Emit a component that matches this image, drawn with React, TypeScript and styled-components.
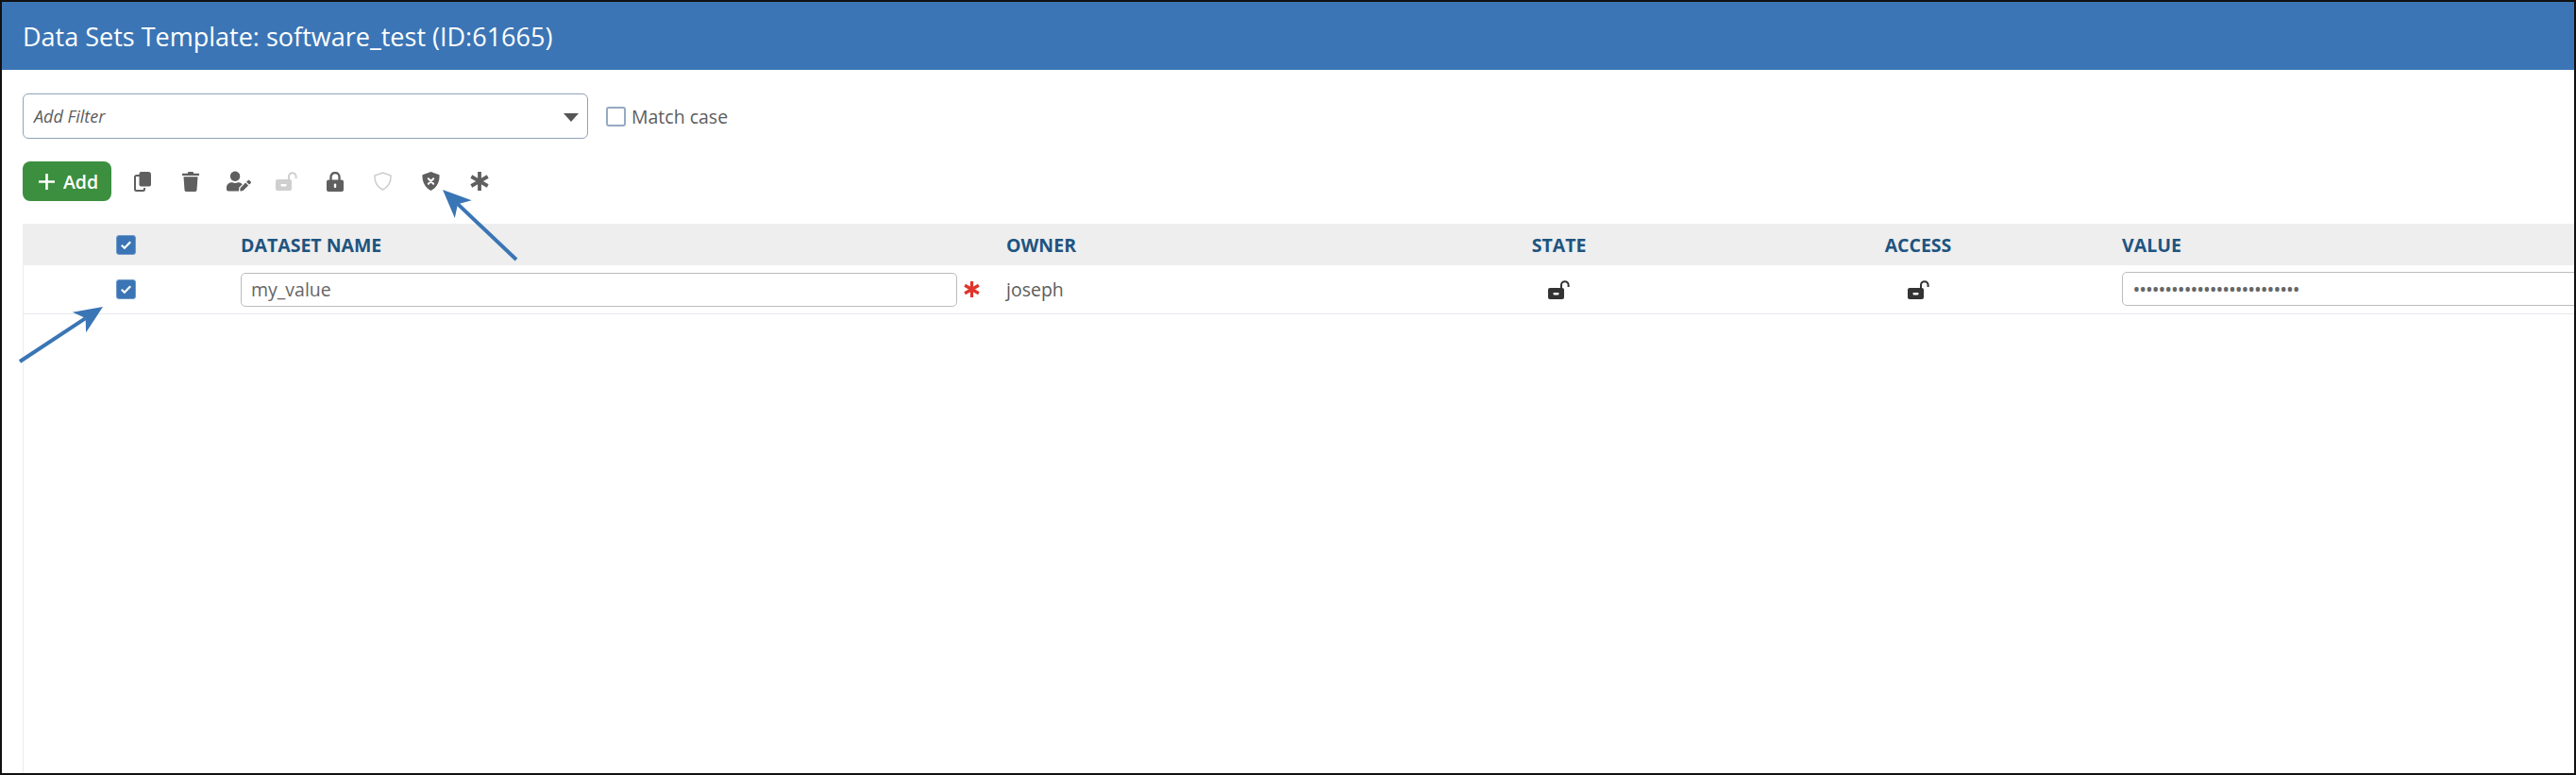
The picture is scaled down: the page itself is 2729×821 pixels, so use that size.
import React from "react";
import styled, { createGlobalStyle } from "styled-components";
import { FaUserEdit } from "react-icons/fa";

const Global = createGlobalStyle`
  html, body { margin: 0; padding: 0; background: #fff; }
  body { font-family: "Open Sans", "Liberation Sans", sans-serif; }
`;

const Frame = styled.div`
  position: relative;
  width: 2729px;
  height: 821px;
  box-sizing: border-box;
  border: 2px solid #111;
  background: #fff;
  overflow: hidden;
  display: flex;
  flex-direction: column;
`;

const TitleBar = styled.header`
  flex: none;
  height: 72px;
  background: #3b75b5;
  color: #fff;
  display: flex;
  align-items: center;
  padding-left: 22px;
  font-size: 27px;
`;

const Content = styled.main`
  flex: 1;
  min-height: 0;
  display: flex;
  flex-direction: column;
  padding: 25px 0 0 22px;
`;

const FilterRow = styled.div`
  display: flex;
  align-items: center;
  height: 48px;
`;

const FilterSelect = styled.div`
  position: relative;
  width: 599px;
  height: 48px;
  box-sizing: border-box;
  border: 1px solid #8fa3b8;
  border-radius: 6px;
  display: flex;
  align-items: center;
  padding-left: 11px;
  font-size: 18px;
  font-style: italic;
  color: #5c5c5c;
`;

const Caret = styled.span`
  position: absolute;
  right: 9px;
  top: 20px;
  width: 0;
  height: 0;
  border-left: 8px solid transparent;
  border-right: 8px solid transparent;
  border-top: 9px solid #555;
`;

const MatchBox = styled.span`
  width: 21px;
  height: 21px;
  box-sizing: border-box;
  border: 2px solid #95a9c2;
  border-radius: 3px;
  margin: 0 6px 0 19px;
`;

const MatchLabel = styled.span`
  font-size: 19.5px;
  color: #5c5c5c;
`;

const Toolbar = styled.div`
  display: flex;
  align-items: center;
  height: 42px;
  margin-top: 24px;
`;

const AddButton = styled.button`
  width: 94px;
  height: 42px;
  padding: 0 0 0 3px;
  border: 0;
  border-radius: 8px;
  background: #3c8f3f;
  color: #fff;
  display: flex;
  align-items: center;
  justify-content: center;
  gap: 9px;
  font: 600 19.5px "Open Sans", sans-serif;
  margin-right: 7px;
`;

const ToolSlot = styled.span<{ $muted?: boolean }>`
  width: 51px;
  display: flex;
  justify-content: center;
  align-items: center;
  color: ${(p) => (p.$muted ? "#cfcfcf" : "#5f5f5f")};
`;

const Table = styled.div`
  flex: 1;
  margin-top: 24px;
  border-left: 1px solid #ececec;
`;

const columns = "231px 811px 395px 381px 380px 1fr";

const HeadRow = styled.div`
  display: grid;
  grid-template-columns: ${columns};
  height: 44px;
  margin-left: -1px;
  background: #eeeeee;
  align-items: center;
`;

const BodyRow = styled.div`
  display: grid;
  grid-template-columns: ${columns};
  height: 52px;
  box-sizing: border-box;
  margin-left: -1px;
  border-bottom: 1px solid #e6e8ee;
  align-items: center;
  font-size: 19.5px;
  color: #5c5c5c;
`;

const CheckCell = styled.div`
  padding-left: 99px;
  display: flex;
`;

const HeadCell = styled.div<{ $center?: boolean; $pad?: number }>`
  font-size: 19.5px;
  font-weight: 700;
  color: #1e5480;
  text-align: ${(p) => (p.$center ? "center" : "left")};
  padding-left: ${(p) => p.$pad ?? 0}px;
`;

const Check = styled.span`
  width: 21px;
  height: 21px;
  box-sizing: border-box;
  border-radius: 3px;
  border: 1px solid #6f9acb;
  background: #3b75b5;
  display: flex;
  align-items: center;
  justify-content: center;
`;

const NameCell = styled.div`
  display: flex;
  align-items: center;
`;

const Field = styled.div<{ $w: number; $pad: number }>`
  width: ${(p) => p.$w}px;
  flex: none;
  height: 36px;
  box-sizing: border-box;
  border: 1px solid #bcbcbc;
  border-radius: 5px;
  background: #fff;
  padding-left: ${(p) => p.$pad}px;
  display: flex;
  align-items: center;
  color: #666;
  white-space: nowrap;
`;

const Dots = styled.span`
  font-size: 18px;
  font-weight: 600;
`;

const Required = styled.span`
  flex: none;
  margin-left: 7px;
  display: flex;
`;

const IconCell = styled.div`
  display: flex;
  justify-content: center;
  color: #333;
`;

const ValueCell = styled.div<{ $pad: number }>`
  padding-left: ${(p) => p.$pad}px;
  margin-top: -2px;
  min-width: 0;
`;

const ArrowLayer = styled.svg`
  position: absolute;
  left: -2px;
  top: -2px;
  pointer-events: none;
`;

const CheckGlyph = () => (
  <svg width="13" height="11" viewBox="0 0 13 11" aria-hidden>
    <path d="M1.8 5.8 4.9 8.8 11.2 2.2" fill="none" stroke="#fff" strokeWidth="2.2" />
  </svg>
);

const CopyIcon = () => (
  <svg width="18" height="21" viewBox="0 0 18 21" aria-hidden>
    <path d="M7 4H2.5A1.5 1.5 0 0 0 1 5.5v13A1.5 1.5 0 0 0 2.5 20h7a1.5 1.5 0 0 0 1.5-1.5V17" fill="none" stroke="currentColor" strokeWidth="2" />
    <path d="M7.5 0H15a3 3 0 0 1 3 3v10.5a2 2 0 0 1-2 2H7.5a2 2 0 0 1-2-2V2a2 2 0 0 1 2-2z" fill="currentColor" />
  </svg>
);

const TrashIcon = () => (
  <svg width="18" height="21" viewBox="0 0 18 21" aria-hidden>
    <path d="M6.500 0h5l.8 1.800H18v2.200H0V1.800h5.700z" fill="currentColor" />
    <path d="M1.500 5.300h15l-1 14a1.800 1.800 0 0 1-1.800 1.700H4.300a1.800 1.800 0 0 1-1.800-1.700z" fill="currentColor" />
  </svg>
);

const LockIcon = () => (
  <svg width="18" height="21" viewBox="0 0 18 21" aria-hidden>
    <path d="M2 8.500h14a2 2 0 0 1 2 2V19a2 2 0 0 1-2 2H2a2 2 0 0 1-2-2v-8.500a2 2 0 0 1 2-2z" fill="currentColor" />
    <path d="M4.500 9V5.500a4.500 4.500 0 0 1 9 0V9" fill="none" stroke="currentColor" strokeWidth="2.400" />
    <rect x="7.800" y="12.500" width="2.400" height="4.500" rx="1" fill="#fff" />
  </svg>
);

const UnlockIcon = ({ w, h }: { w: number; h: number }) => (
  <svg width={w} height={h} viewBox="0 0 23 20" aria-hidden>
    <path d="M2 8h13a2 2 0 0 1 2 2v8a2 2 0 0 1-2 2H2a2 2 0 0 1-2-2v-8a2 2 0 0 1 2-2z" fill="currentColor" />
    <rect x="5.500" y="13" width="6" height="2.400" rx="0.800" fill="#fff" />
    <path d="M14 8V5a3.800 3.800 0 0 1 7.600 0v2" fill="none" stroke="currentColor" strokeWidth="2" />
  </svg>
);

const ShieldOutline = () => (
  <svg width="19" height="20" viewBox="0 0 19 20" aria-hidden>
    <path d="M9.500 1 18 4c.4 6.800-2.400 12-8.500 15C3.400 16 .6 10.800 1 4z" fill="none" stroke="currentColor" strokeWidth="1.600" strokeLinejoin="round" />
  </svg>
);

const ShieldX = () => (
  <svg width="19" height="20" viewBox="0 0 19 20" aria-hidden>
    <path d="M9.500 0 18.500 3.300c.4 7.300-2.500 13.200-9 16.700C3 16.500.1 10.600.5 3.300z" fill="currentColor" />
    <path d="M6.800 7.300 12.200 12.700M12.200 7.300 6.800 12.700" stroke="#fff" strokeWidth="2" strokeLinecap="round" />
  </svg>
);

const Asterisk = ({ size, color }: { size: number; color: string }) => (
  <svg width={size} height={size} viewBox="0 0 20 20" aria-hidden>
    <path d="M10 0V20M1.300 5 18.700 15M18.700 5 1.300 15" stroke={color} strokeWidth="3.800" fill="none" />
  </svg>
);

const Arrow = ({ x1, y1, x2, y2 }: { x1: number; y1: number; x2: number; y2: number }) => {
  const a = Math.atan2(y2 - y1, x2 - x1);
  const len = 30;
  const wing = 13;
  const bx = x2 - Math.cos(a) * len;
  const by = y2 - Math.sin(a) * len;
  const nx = x2 - Math.cos(a) * (len - 8);
  const ny = y2 - Math.sin(a) * (len - 8);
  const px = -Math.sin(a) * wing;
  const py = Math.cos(a) * wing;
  return (
    <g fill="#3a75b5" stroke="#3a75b5">
      <line x1={x1} y1={y1} x2={nx} y2={ny} strokeWidth="4" />
      <polygon stroke="none" points={`${x2},${y2} ${bx + px},${by + py} ${nx},${ny} ${bx - px},${by - py}`} />
    </g>
  );
};

export default function App() {
  return (
    <>
      <Global />
      <Frame>
        <TitleBar>Data Sets Template: software_test (ID:61665)</TitleBar>
        <Content>
          <FilterRow>
            <FilterSelect>
              Add Filter
              <Caret />
            </FilterSelect>
            <MatchBox />
            <MatchLabel>Match case</MatchLabel>
          </FilterRow>
          <Toolbar>
            <AddButton>
              <svg width="17" height="17" viewBox="0 0 17 17" aria-hidden>
                <path d="M8.500 0V17M0 8.500H17" stroke="#fff" strokeWidth="2.600" />
              </svg>
              Add
            </AddButton>
            <ToolSlot><CopyIcon /></ToolSlot>
            <ToolSlot><TrashIcon /></ToolSlot>
            <ToolSlot><FaUserEdit size={26} /></ToolSlot>
            <ToolSlot $muted><UnlockIcon w={23} h={20} /></ToolSlot>
            <ToolSlot><LockIcon /></ToolSlot>
            <ToolSlot $muted><ShieldOutline /></ToolSlot>
            <ToolSlot><ShieldX /></ToolSlot>
            <ToolSlot><Asterisk size={20} color="#5f5f5f" /></ToolSlot>
          </Toolbar>
          <Table>
            <HeadRow>
              <CheckCell><Check><CheckGlyph /></Check></CheckCell>
              <HeadCell>DATASET NAME</HeadCell>
              <HeadCell>OWNER</HeadCell>
              <HeadCell $center>STATE</HeadCell>
              <HeadCell $center>ACCESS</HeadCell>
              <HeadCell $pad={26}>VALUE</HeadCell>
            </HeadRow>
            <BodyRow>
              <CheckCell><Check><CheckGlyph /></Check></CheckCell>
              <NameCell>
                <Field $w={759} $pad={10}>my_value</Field>
                <Required><Asterisk size={17} color="#e0352b" /></Required>
              </NameCell>
              <div>joseph</div>
              <IconCell><UnlockIcon w={23} h={20} /></IconCell>
              <IconCell><UnlockIcon w={23} h={20} /></IconCell>
              <ValueCell $pad={26}>
                <Field $w={600} $pad={11}><Dots>••••••••••••••••••••••••••</Dots></Field>
              </ValueCell>
            </BodyRow>
          </Table>
        </Content>
        <ArrowLayer width="2729" height="821" viewBox="0 0 2729 821" aria-hidden>
          <Arrow x1={547} y1={275} x2={469} y2={201} />
          <Arrow x1={21} y1={383} x2={109} y2={325} />
        </ArrowLayer>
      </Frame>
    </>
  );
}
